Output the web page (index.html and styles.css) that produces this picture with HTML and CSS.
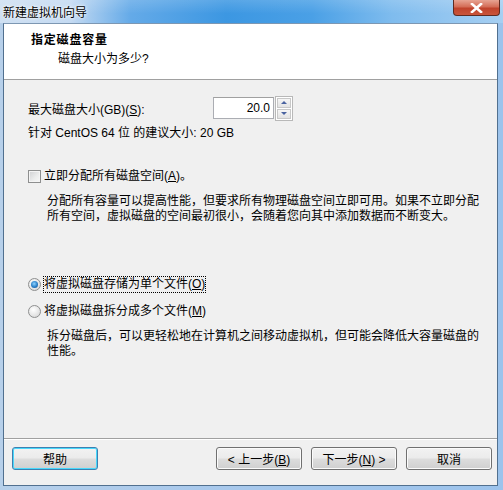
FILE: index.html
```html
<!DOCTYPE html>
<html lang="zh-CN">
<head>
    <meta charset="UTF-8">
    <title>新建虚拟机向导</title>
    <link rel="stylesheet" href="styles.css">
</head>
<body>
    <div class="window">
        <div class="titlebar">
            <span class="title">新建虚拟机向导</span>
            <button class="close" aria-label="关闭">
                <svg width="13" height="10" viewBox="0 0 13 10">
                    <path d="M2 1 L11 9 M11 1 L2 9" stroke="#fff" stroke-width="2.6" stroke-linecap="square"/>
                </svg>
            </button>
        </div>
        <div class="client">
            <div class="header">
                <div class="header-title">指定磁盘容量</div>
                <div class="header-sub">磁盘大小为多少?</div>
            </div>
            <div class="content">
                <div class="size-row">
                    <label for="size" class="size-label">最大磁盘大小(GB)(<u>S</u>):</label>
                    <input type="text" id="size" class="size-input" value="20.0">
                    <div class="spin">
                        <span class="spin-btn"><i class="arrow-up"></i></span>
                        <span class="spin-btn"><i class="arrow-down"></i></span>
                    </div>
                </div>
                <div class="hint">针对 CentOS 64 位 的建议大小: 20 GB</div>

                <div class="option opt-check">
                    <span class="checkbox"></span>
                    <span>立即分配所有磁盘空间(<u>A</u>)。</span>
                </div>
                <p class="desc desc-alloc">分配所有容量可以提高性能，但要求所有物理磁盘空间立即可用。如果不立即分配<br>所有空间，虚拟磁盘的空间最初很小，会随着您向其中添加数据而不断变大。</p>

                <div class="option opt-single">
                    <span class="radio checked"></span>
                    <span class="focus">将虚拟磁盘存储为单个文件(<u>O</u>)</span>
                </div>
                <div class="option opt-multi">
                    <span class="radio"></span>
                    <span>将虚拟磁盘拆分成多个文件(<u>M</u>)</span>
                </div>
                <p class="desc desc-split">拆分磁盘后，可以更轻松地在计算机之间移动虚拟机，但可能会降低大容量磁盘的<br>性能。</p>
            </div>
            <div class="footer">
                <button class="btn btn-default">帮助</button>
                <div class="nav">
                    <button class="btn">&lt; 上一步(<u>B</u>)</button>
                    <button class="btn">下一步(<u>N</u>) &gt;</button>
                    <button class="btn">取消</button>
                </div>
            </div>
        </div>
    </div>
</body>
</html>
```

FILE: styles.css
```css
body {
    margin: 0;
    width: 503px;
    height: 490px;
    overflow: hidden;
    font-family: "Liberation Sans", "Noto Sans CJK SC", sans-serif;
    font-size: 12px;
    color: #000;
}
.window {
    display: flex;
    flex-direction: column;
    height: 490px;
    background: linear-gradient(90deg, #b7d0ea 0%, #a9c9ec 40%, #9cc3ec 100%);
}
.titlebar {
    height: 23px;
    display: flex;
    align-items: flex-start;
    justify-content: space-between;
    background:
        linear-gradient(180deg, rgba(255,255,255,0.15) 0%, rgba(255,255,255,0) 60%),
        linear-gradient(90deg, #cfe0f2 0%, #c4daf2 14%, #64aae8 26%, #3c97e2 45%, #4aa0e6 62%, #7fbcee 78%, #a6cff2 100%);
}
.title {
    padding: 3px 0 0 3px;
    text-shadow: 0 0 4px #fff, 0 0 2px #fff;
}
.close {
    width: 47px;
    height: 16px;
    margin-right: 3px;
    padding: 0;
    border: 1px solid #5e2b22;
    border-top: none;
    border-radius: 0 0 4px 4px;
    background: linear-gradient(180deg, #e7a493 0%, #d46d57 45%, #c0432c 55%, #c9553b 100%);
    display: flex;
    align-items: center;
    justify-content: center;
}
.client {
    flex: 1;
    display: flex;
    flex-direction: column;
    margin: 0 5px 4px 3px;
    border: 1px solid #51708f;
    border-top-color: #7d97b2;
    background-color: #f0f0f0;
}
.header {
    height: 56px;
    background-color: #fff;
    border-bottom: 1px solid #a0a0a0;
    box-sizing: border-box;
    padding-top: 8px;
}
.header-title {
    font-weight: bold;
    letter-spacing: 0.8px;
    line-height: 16px;
    padding-left: 27px;
}
.header-sub {
    line-height: 16px;
    margin-top: 3px;
    padding-left: 54px;
}
.content {
    flex: 1;
    padding: 17px 0 0 24px;
}
.size-row {
    display: flex;
    align-items: center;
    height: 22px;
}
.size-label {
    width: 185px;
}
.size-input {
    width: 61px;
    height: 22px;
    box-sizing: border-box;
    border: 1px solid #abadb3;
    border-top-color: #a0a0a0;
    padding: 0 3px 0 0;
    text-align: right;
    font: inherit;
    font-size: 12px;
}
.spin {
    display: flex;
    flex-direction: column;
    gap: 1px;
    margin-left: 1px;
    padding: 1px;
    border: 1px solid #b8b8b8;
    background: #fff;
}
.spin-btn {
    width: 12px;
    height: 8px;
    border: 1px solid #c8c8c8;
    background: linear-gradient(180deg, #f6f6f6, #e3e3e3);
    display: flex;
    align-items: center;
    justify-content: center;
}
.arrow-up {
    border-left: 3px solid transparent;
    border-right: 3px solid transparent;
    border-bottom: 3px solid #4a63a0;
}
.arrow-down {
    border-left: 3px solid transparent;
    border-right: 3px solid transparent;
    border-top: 3px solid #4a63a0;
}
.hint {
    margin-top: 7px;
    line-height: 15px;
}
.option {
    display: flex;
    align-items: center;
    gap: 3px;
    line-height: 15px;
}
.opt-check {
    margin-top: 28px;
}
.opt-single {
    margin-top: 53px;
}
.opt-multi {
    margin-top: 12px;
}
.checkbox {
    width: 11px;
    height: 11px;
    border: 1px solid #8e8f8f;
    background: linear-gradient(135deg, #cfd0d2 0%, #eceded 60%, #f7f7f7 100%);
    box-shadow: inset 0 0 0 1px #f4f4f4;
}
.radio {
    width: 11px;
    height: 11px;
    border: 1px solid #8e8f8f;
    border-radius: 50%;
    background: radial-gradient(circle at 40% 35%, #fff 0%, #e4e4e4 60%, #cfcfcf 100%);
    position: relative;
}
.radio.checked::after {
    content: "";
    position: absolute;
    left: 2px;
    top: 2px;
    width: 7px;
    height: 7px;
    border-radius: 50%;
    background: radial-gradient(circle at 45% 40%, #8fd3ff 0%, #2a7fc7 55%, #174a8a 100%);
}
.focus {
    outline: 1px dotted #000;
    outline-offset: 0;
}
.desc {
    margin: 0;
    padding-left: 19px;
    white-space: nowrap;
    line-height: 15px;
}
.desc-alloc {
    margin-top: 10px;
}
.desc-split {
    margin-top: 10px;
}
.footer {
    height: 38px;
    border-top: 1px solid #a0a0a0;
    box-shadow: inset 0 1px 0 #fff;
    display: flex;
    justify-content: space-between;
    align-items: flex-start;
    padding: 8px 5px 0 8px;
}
.nav {
    display: flex;
    gap: 9px;
}
.btn {
    width: 86px;
    height: 23px;
    padding: 0;
    border: 1px solid #707070;
    border-radius: 3px;
    background: linear-gradient(180deg, #f2f2f2 0%, #ebebeb 48%, #dddddd 52%, #cfcfcf 100%);
    box-shadow: inset 0 0 0 1px #fbfbfb;
    font: inherit;
    font-size: 12px;
    color: #000;
}
.btn-default {
    border-color: #3c7fb1;
    box-shadow: inset 0 0 0 1px #48d8fb;
}
```
